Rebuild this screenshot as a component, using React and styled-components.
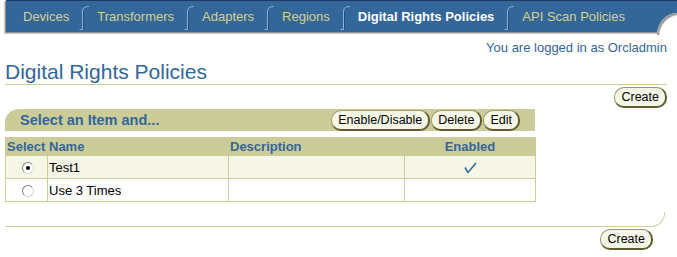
import React from 'react';
import styled, { createGlobalStyle } from 'styled-components';

const GlobalStyle = createGlobalStyle`
  body {
    margin: 0;
    background: #ffffff;
    font-family: "Liberation Sans", Arial, sans-serif;
  }
`;

const Page = styled.div`
  width: 677px;
`;

const TabBar = styled.div`
  position: relative;
  display: flex;
  align-items: center;
  height: 31px;
  margin-left: 6px;
  padding-left: 17px;
  background: #336699;
  border-top: 1px solid #1c3a63;
  box-shadow: -1px 1px 0 #8f8f8f, -2px 2px 1px #d0d0d0;

  &::after {
    content: '';
    position: absolute;
    right: 0;
    bottom: -3px;
    width: 20px;
    height: 22px;
    background: #ffffff;
    border-top-left-radius: 100%;
    box-shadow: inset 2px 2px 1px #9a9a9a;
  }
`;

const Tab = styled.span`
  font-size: 13px;
  color: ${p => (p.$active ? '#ffffff' : '#d6d28c')};
  font-weight: ${p => (p.$active ? 'bold' : 'normal')};
  white-space: nowrap;
`;

const Sep = styled.svg`
  flex: none;
  margin: 2px 7px 0 10px;
`;

const Separator = () => (
  <Sep width="11" height="26" viewBox="0 0 11 26">
    <path d="M0.5 24.5 H3.5 V6 Q3.5 1.5 10 1.5" fill="none" stroke="#8cb0dc" strokeWidth="1" />
    <path d="M4.5 24.5 V7" fill="none" stroke="#224b7a" strokeWidth="1" />
  </Sep>
);

const Login = styled.div`
  margin-top: 8px;
  padding-right: 10px;
  text-align: right;
  font-size: 13px;
  line-height: 16px;
  color: #336699;
`;

const Title = styled.h1`
  margin: 4px 10px 0 5px;
  font-size: 21px;
  line-height: 24px;
  font-weight: normal;
  color: #336699;
  border-bottom: 1px solid #cccc99;
`;

const ButtonRow = styled.div`
  display: flex;
  justify-content: flex-end;
  margin-top: ${p => p.$top || 0}px;
  padding-right: ${p => p.$right || 10}px;
`;

const Button = styled.button`
  height: 21px;
  padding: 0 6px;
  font-family: "Liberation Sans", Arial, sans-serif;
  font-size: 12.5px;
  color: #000000;
  background: #f7f7e7;
  border: 1px solid #9a9a6a;
  border-right: 2px solid #5c5c2e;
  border-bottom: 2px solid #5c5c2e;
  border-radius: 10px;
  line-height: 17px;
`;

const Panel = styled.div`
  margin-left: 5px;
  width: 530px;
`;

const PanelBar = styled.div`
  display: flex;
  align-items: flex-start;
  justify-content: space-between;
  height: 22px;
  margin-top: 1px;
  padding: 0 15px;
  background: #cccc99;
  border-top-left-radius: 14px;
`;

const PanelTitle = styled.span`
  font-size: 14.5px;
  font-weight: bold;
  line-height: 22px;
  color: #336699;
`;

const Actions = styled.div`
  display: flex;
  gap: 1px;
  padding-top: 1px;
`;

const Table = styled.table`
  margin-top: 6px;
  width: 530px;
  border-collapse: collapse;
  table-layout: fixed;
`;

const Th = styled.th`
  height: 17px;
  padding: 0 1px;
  background: #cccc99;
  border: 1px solid #cccc99;
  border-left-color: #f7f7e7;
  font-size: 13px;
  font-weight: bold;
  color: #336699;
  text-align: ${p => p.$align || 'left'};
  &:first-child { border-left-color: #cccc99; }
`;

const Tr = styled.tr`
  background: ${p => (p.$alt ? '#f7f7e7' : '#ffffff')};
`;

const Td = styled.td`
  height: 22px;
  padding: 0 1px;
  border: 1px solid #cccc99;
  font-size: 13px;
  color: #000000;
  text-align: ${p => p.$align || 'left'};
  vertical-align: middle;
`;

const Radio = styled.span`
  display: inline-flex;
  align-items: center;
  justify-content: center;
  width: 10px;
  height: 10px;
  margin-left: 3px;
  border-radius: 50%;
  background: #ffffff;
  border: 1px solid #808080;
  border-right-color: #d8d8d8;
  border-bottom-color: #d8d8d8;
  vertical-align: middle;

  &::after {
    content: '';
    width: 4px;
    height: 4px;
    border-radius: 50%;
    background: ${p => (p.$checked ? '#000000' : 'transparent')};
  }
`;

const Check = () => (
  <svg width="13" height="12" viewBox="0 0 13 12" style={{ verticalAlign: 'middle' }}>
    <path d="M1 5.5 L4 10.5 L12 1" fill="none" stroke="#336699" strokeWidth="1.6" />
  </svg>
);

const Footer = styled.div`
  height: 14px;
  margin: 10px 12px 0 5px;
  border-bottom: 1px solid #cccc99;
  border-right: 1px solid #cccc99;
  border-bottom-right-radius: 14px;
`;

const tabs = ['Devices', 'Transformers', 'Adapters', 'Regions', 'Digital Rights Policies', 'API Scan Policies'];

const rows = [
  { name: 'Test1', description: '', enabled: true, checked: true },
  { name: 'Use 3 Times', description: '', enabled: false, checked: false },
];

export default function App() {
  return (
    <Page>
      <GlobalStyle />
      <TabBar>
        {tabs.map((t, i) => (
          <React.Fragment key={t}>
            {i > 0 && <Separator />}
            <Tab $active={t === 'Digital Rights Policies'}>{t}</Tab>
          </React.Fragment>
        ))}
      </TabBar>
      <Login>You are logged in as Orcladmin</Login>
      <Title>Digital Rights Policies</Title>
      <ButtonRow $top={2}>
        <Button>Create</Button>
      </ButtonRow>
      <Panel>
        <PanelBar>
          <PanelTitle>Select an Item and...</PanelTitle>
          <Actions>
            <Button>Enable/Disable</Button>
            <Button>Delete</Button>
            <Button>Edit</Button>
          </Actions>
        </PanelBar>
        <Table>
          <colgroup>
            <col style={{ width: 42 }} />
            <col style={{ width: 181 }} />
            <col style={{ width: 176 }} />
            <col style={{ width: 131 }} />
          </colgroup>
          <thead>
            <tr>
              <Th>Select</Th>
              <Th>Name</Th>
              <Th>Description</Th>
              <Th $align="center">Enabled</Th>
            </tr>
          </thead>
          <tbody>
            {rows.map((r, i) => (
              <Tr key={r.name} $alt={i % 2 === 0}>
                <Td $align="center"><Radio $checked={r.checked} /></Td>
                <Td>{r.name}</Td>
                <Td>{r.description}</Td>
                <Td $align="center">{r.enabled && <Check />}</Td>
              </Tr>
            ))}
          </tbody>
        </Table>
      </Panel>
      <Footer />
      <ButtonRow $top={2} $right={24}>
        <Button>Create</Button>
      </ButtonRow>
    </Page>
  );
}
